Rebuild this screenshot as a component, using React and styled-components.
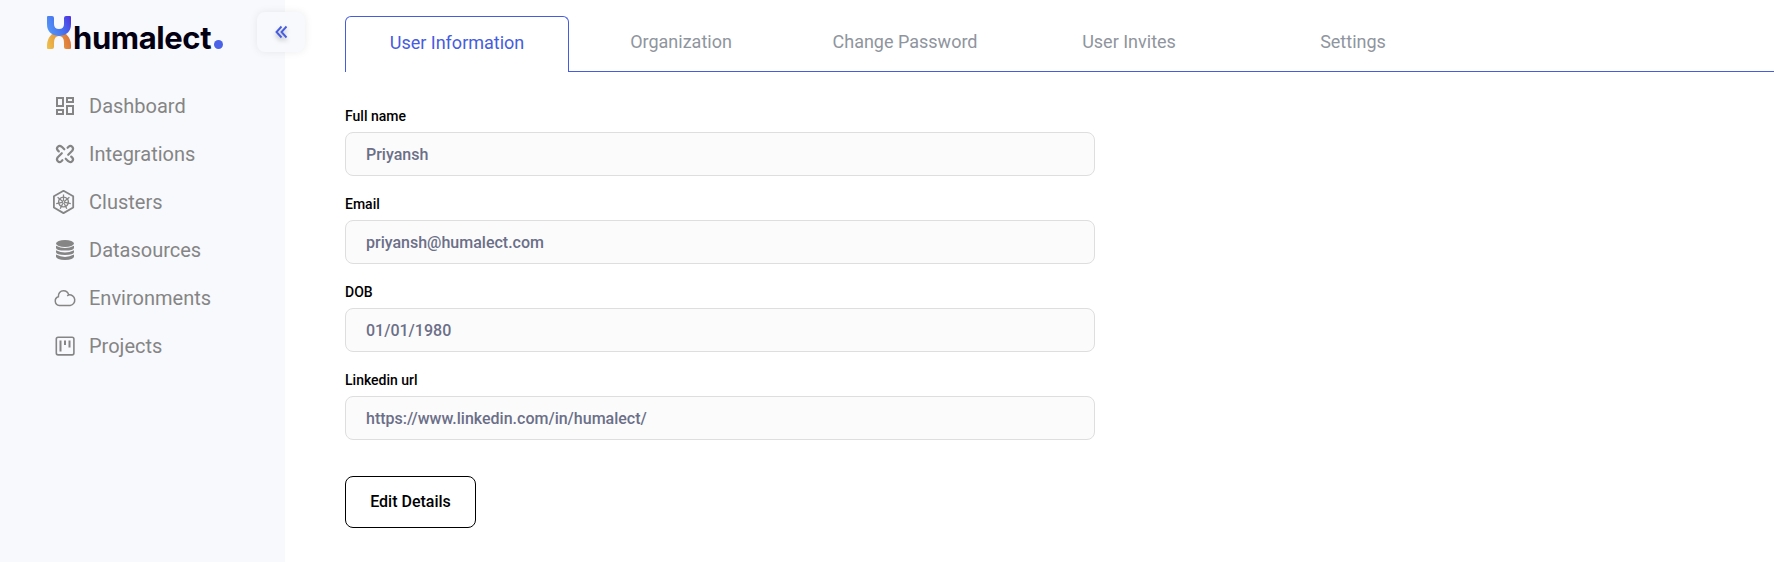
import React from "react";
import styled, { createGlobalStyle } from "styled-components";
import { MdOutlineDashboard } from "react-icons/md";

const GlobalStyle = createGlobalStyle`
  * { box-sizing: border-box; }
  body { margin: 0; background: #fff; font-family: Roboto, "Liberation Sans", sans-serif; }
`;

const Page = styled.div`
  display: flex;
  height: 562px;
  overflow: hidden;
`;

const Sidebar = styled.aside`
  position: relative;
  flex: 0 0 285px;
  background: #f8f9fd;
`;

const Brand = styled.div`
  display: flex;
  height: 82px;
  padding: 15px 0 0 46px;
`;

const Wordmark = styled.span`
  width: 140px;
  margin: 5px 0 0 1px;
  font: 700 31px/36px Inter, sans-serif;
  letter-spacing: -0.4px;
  color: #030014;
`;

const Dot = styled.span`
  width: 9px;
  height: 9px;
  margin: 25px 0 0 1px;
  border-radius: 50%;
  background: #4a62e8;
`;

const Toggle = styled.button`
  position: absolute;
  top: 12px;
  right: -20px;
  display: flex;
  align-items: center;
  justify-content: center;
  width: 48px;
  height: 40px;
  padding: 0;
  border: 0;
  border-radius: 8px;
  background: #f8f9fd;
  box-shadow: 0 0 8px rgba(0, 0, 0, 0.08);

  svg { filter: drop-shadow(0 3px 2px rgba(0, 0, 0, 0.25)); }
`;

const Nav = styled.nav`
  display: flex;
  flex-direction: column;
`;

const NavItem = styled.a`
  display: flex;
  align-items: center;
  gap: 12px;
  height: 48px;
  padding-left: 53px;
  font-size: 20px;
  color: #858585;

  svg { flex: none; }
`;

const Main = styled.main`
  flex: 1;
  padding: 16px 0 0 60px;
`;

const Tabs = styled.div`
  display: flex;
  height: 56px;
`;

const Tab = styled.button`
  width: 224px;
  padding: 0 0 4px;
  border: 1px solid #465ce0;
  border-width: ${(p) => (p.$active ? "1px 1px 0" : "0 0 1px")};
  border-radius: ${(p) => (p.$active ? "6px 6px 0 0" : "0")};
  background: #fff;
  font: 400 18px/24px Roboto, sans-serif;
  color: ${(p) => (p.$active ? "#465ce0" : "#8f959e")};
`;

const TabRule = styled.div`
  flex: 1;
  border-bottom: 1px solid #465ce0;
`;

const Form = styled.form`
  display: flex;
  flex-direction: column;
  gap: 20px;
  width: 750px;
  padding-top: 36px;
`;

const Field = styled.label`
  display: flex;
  flex-direction: column;
  gap: 8px;
  font-size: 14px;
  font-weight: 500;
  line-height: 16px;
  color: #000;
`;

const Input = styled.input`
  height: 44px;
  padding: 0 20px;
  border: 1px solid #dedede;
  border-radius: 8px;
  background: #fbfbfb;
  font: 500 16px/20px Roboto, sans-serif;
  color: #6b6f88;
  outline: none;
`;

const EditButton = styled.button`
  align-self: flex-start;
  width: 131px;
  height: 52px;
  margin-top: 16px;
  padding: 0 0 1px;
  border: 1px solid #000;
  border-radius: 8px;
  background: #fff;
  font: 500 16px/20px Roboto, sans-serif;
  color: #000;
`;

const LogoMark = () => (
  <svg width="26" height="35" viewBox="0 0 26 35" fill="none">
    <defs>
      <linearGradient id="blue" x1="1" y1="16" x2="25" y2="4" gradientUnits="userSpaceOnUse">
        <stop stopColor="#5598f7" />
        <stop offset="0.55" stopColor="#4670ee" />
        <stop offset="1" stopColor="#4f35df" />
      </linearGradient>
      <linearGradient id="orange" x1="1" y1="32" x2="25" y2="24" gradientUnits="userSpaceOnUse">
        <stop stopColor="#eec14a" />
        <stop offset="1" stopColor="#dc7239" />
      </linearGradient>
    </defs>
    <path d="M1 33V30Q1 24 6 19Q13 16 20 19Q25 24 25 30V33Q25 34 24 34H20Q18 34 18 32V28Q18 21 13 21Q8 21 8 28V32Q8 34 6 34H2Q1 34 1 33Z" fill="url(#orange)" />
    <path d="M1 2Q1 1 2 1H6Q8 1 8 3V9Q8 14 13 14Q18 14 18 9V3Q18 1 20 1H24Q25 1 25 2V9Q25 20 13 21Q1 20 1 9Z" fill="url(#blue)" />
  </svg>
);

const CollapseIcon = () => (
  <svg width="14" height="14" viewBox="0 0 14 14" fill="none" stroke="#465ce0" strokeWidth="1.9">
    <path d="M7.5 1.5 2.500 7l5 5.500M12.500 1.500 7.500 7l5 5.500" />
  </svg>
);

const IntegrationsIcon = () => (
  <svg width="24" height="24" viewBox="0 0 24 24" fill="none" stroke="currentColor" strokeWidth="2.2" strokeLinecap="round" strokeLinejoin="round">
    <path d="M5.8 9.4 4.8 8.4C3.7 7.2 3.8 5.8 4.8 4.8S7.5 3.8 8.8 4.8L11.3 7.3" />
    <path d="M14.6 5.8 15.6 4.8C16.8 3.7 18.2 3.8 19.2 4.8S20.2 7.5 19.2 8.8L15.200 12.800" />
    <path d="M18.2 14.6 19.2 15.6C20.3 16.8 20.2 18.2 19.2 19.2S16.5 20.2 15.2 19.2L12.700 16.700" />
    <path d="M9.4 18.2 8.4 19.2C7.2 20.3 5.8 20.2 4.8 19.2S3.8 16.5 4.8 15.2L8.800 11.200" />
  </svg>
);

const ClustersIcon = () => (
  <svg width="24" height="26" viewBox="0 0 24 26" fill="none" stroke="currentColor">
    <path d="M10.5 1.8 20.2 7.2V18.5L10.5 24.1.9 18.5V7.2Z" strokeWidth="1.8" strokeLinejoin="round" />
    <circle cx="10.5" cy="13" r="4.9" strokeWidth="1.4" />
    <circle cx="10.5" cy="13" r="1.2" strokeWidth="1" />
    <path d="M10.5 5.5V11.7M16.4 8.3 11.5 12.2M17.8 14.7 11.8 13.3M13.8 19.8 11.1 14.2M7.2 19.8 9.9 14.2M3.2 14.7 9.2 13.3M4.6 8.3 9.5 12.2" strokeWidth="1.25" />
  </svg>
);

const DatasourcesIcon = () => (
  <svg width="24" height="24" viewBox="0 0 24 24" fill="currentColor">
    <ellipse cx="12" cy="5.5" rx="9" ry="3.5" />
    <path d="M3 7.7Q12 12.5 21 7.7V10Q20.5 12.6 12 12.6T3 10Z" />
    <path d="M3 12.2Q12 16.8 21 12.2V14.3Q20.5 17 12 17T3 14.3Z" />
    <path d="M3 16.6Q12 21.2 21 16.6V18.8Q20.5 21.9 12 21.9T3 18.8Z" />
  </svg>
);

const CloudIcon = () => (
  <svg width="24" height="24" viewBox="0 0 24 24" fill="none" stroke="currentColor" strokeWidth="1.5">
    <path d="M6.3 19.4A4.4 4.4 0 0 1 5.4 10.8C5 7.2 7.3 4.7 10.5 4.7C13.3 4.7 15.1 6.3 15.7 8.9A5.3 5.3 0 1 1 17.2 19.4ZM14.2 9.9 15.7 8.9" />
  </svg>
);

const ProjectsIcon = () => (
  <svg width="24" height="24" viewBox="0 0 24 24" fill="none" stroke="currentColor">
    <rect x="3.3" y="3.3" width="17.6" height="17.6" rx="1.8" strokeWidth="1.6" />
    <path d="M7.5 6.5V17.5M12 6.5V11M16.5 6.5V13.5" strokeWidth="2" />
  </svg>
);

const DashboardIcon = () => <MdOutlineDashboard size={24} />;

const navItems = [
  ["Dashboard", DashboardIcon],
  ["Integrations", IntegrationsIcon],
  ["Clusters", ClustersIcon],
  ["Datasources", DatasourcesIcon],
  ["Environments", CloudIcon],
  ["Projects", ProjectsIcon],
];

const tabs = ["User Information", "Organization", "Change Password", "User Invites", "Settings"];

const fields = [
  ["Full name", "Priyansh"],
  ["Email", "priyansh@humalect.com"],
  ["DOB", "01/01/1980"],
  ["Linkedin url", "https://www.linkedin.com/in/humalect/"],
];

export default function App() {
  return (
    <>
      <GlobalStyle />
      <Page>
        <Sidebar>
          <Brand>
            <LogoMark />
            <Wordmark>humalect</Wordmark>
            <Dot />
          </Brand>
          <Toggle type="button" aria-label="Collapse sidebar">
            <CollapseIcon />
          </Toggle>
          <Nav>
            {navItems.map(([label, Icon]) => (
              <NavItem key={label}>
                <Icon />
                {label}
              </NavItem>
            ))}
          </Nav>
        </Sidebar>
        <Main>
          <Tabs>
            {tabs.map((label, i) => (
              <Tab key={label} type="button" $active={i === 0}>
                {label}
              </Tab>
            ))}
            <TabRule />
          </Tabs>
          <Form>
            {fields.map(([label, value]) => (
              <Field key={label}>
                {label}
                <Input readOnly value={value} />
              </Field>
            ))}
            <EditButton type="button">Edit Details</EditButton>
          </Form>
        </Main>
      </Page>
    </>
  );
}
